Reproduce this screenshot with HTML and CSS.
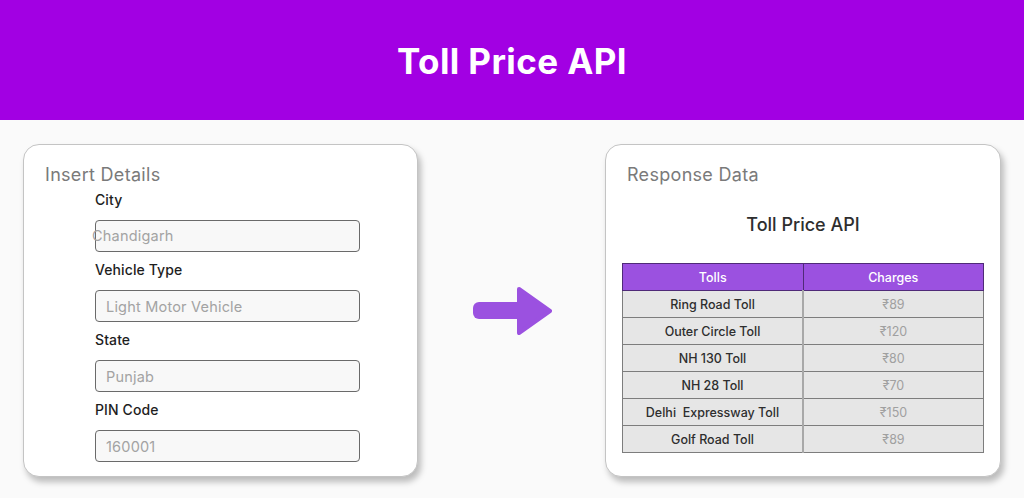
FILE: index.html
```html
<!DOCTYPE html>
<html lang="en">

<head>
    <meta charset="UTF-8" />
    <meta name="viewport" content="width=device-width, initial-scale=1.0" />
    <title>Toll Price API</title>
    <link rel="stylesheet" href="styles.css">
</head>

<body>
    <header class="top_bar">
        <h1>Toll Price API</h1>
    </header>
    <main class="content">
        <section class="card card_form">
            <h2 class="card_title">Insert Details</h2>
            <div class="fields">
                <div class="field">
                    <label>City</label>
                    <div class="input_wrap">
                        <input type="text" aria-label="City">
                        <span class="fake_placeholder">Chandigarh</span>
                    </div>
                </div>
                <div class="field">
                    <label>Vehicle Type</label>
                    <input type="text" placeholder="Light Motor Vehicle">
                </div>
                <div class="field">
                    <label>State</label>
                    <input type="text" placeholder="Punjab">
                </div>
                <div class="field">
                    <label>PIN Code</label>
                    <input type="text" placeholder="160001">
                </div>
            </div>
        </section>

        <div class="arrow">
            <svg width="80" height="50" viewBox="0 0 80 50">
                <rect x="1" y="16" width="50" height="17" rx="6" fill="#9b51e0" />
                <path d="M47 3 L78 25 L47 47 Z" fill="#9b51e0" stroke="#9b51e0" stroke-width="4" stroke-linejoin="round" />
            </svg>
        </div>

        <section class="card card_result">
            <h2 class="card_title">Response Data</h2>
            <h3 class="result_title">Toll Price API</h3>
            <table class="toll_table">
                <thead>
                    <tr>
                        <th>Tolls</th>
                        <th>Charges</th>
                    </tr>
                </thead>
                <tbody>
                    <tr><td>Ring Road Toll</td><td>₹89</td></tr>
                    <tr><td>Outer Circle Toll</td><td>₹120</td></tr>
                    <tr><td>NH 130 Toll</td><td>₹80</td></tr>
                    <tr><td>NH 28 Toll</td><td>₹70</td></tr>
                    <tr><td>Delhi&nbsp; Expressway Toll</td><td>₹150</td></tr>
                    <tr><td>Golf Road Toll</td><td>₹89</td></tr>
                </tbody>
            </table>
        </section>
    </main>
</body>

</html>
```

FILE: styles.css
```css
html,
body {
    margin: 0;
    padding: 0;
    height: 100%;
}

body {
    background: #fafafa;
    font-family: Inter, "Noto Sans", sans-serif;
}

.top_bar {
    background: #a200e3;
    height: 120px;
    display: flex;
    justify-content: center;
    align-items: center;
}

.top_bar h1 {
    margin: 2px 0 0 0;
    color: #fff;
    font-size: 35px;
    font-weight: 700;
    letter-spacing: 0.4px;
}

.content {
    display: flex;
    justify-content: space-between;
    align-items: center;
    padding: 24px 23px 0 23px;
}

.card {
    box-sizing: border-box;
    height: 333px;
    background: #fff;
    border: 1px solid #c4c4c4;
    border-radius: 16px;
    box-shadow: 3px 5px 6px rgba(0, 0, 0, 0.25);
}

.card_form {
    width: 395px;
    padding: 18px 21px 0 21px;
}

.card_result {
    width: 396px;
    padding: 18px 16px 0 16px;
}

.card_title {
    margin: 0;
    font-size: 18px;
    font-weight: 400;
    line-height: 24px;
    color: #7a7a7a;
    letter-spacing: 0.3px;
}

.card_result .card_title {
    padding-left: 5px;
}

.fields {
    margin-left: 50px;
    margin-top: 2px;
}

.field {
    display: flex;
    flex-direction: column;
    width: 265px;
    margin-bottom: 7px;
}

.field label {
    font-size: 14px;
    line-height: 22px;
    color: #1e1e1e;
    font-weight: 500;
    margin-bottom: 9px;
    letter-spacing: 0.1px;
}

.field input {
    box-sizing: border-box;
    width: 100%;
    height: 32px;
    border: 1px solid #6a6a6a;
    border-radius: 4px;
    background: #f8f8f8;
    padding: 0 10px;
    font-family: Inter, "Noto Sans", sans-serif;
    font-size: 14.5px;
    letter-spacing: 0.2px;
}

.field input::placeholder {
    color: #a3a3a3;
}

.input_wrap {
    position: relative;
    display: flex;
}

.fake_placeholder {
    position: absolute;
    left: -3px;
    top: 0;
    line-height: 32px;
    font-size: 14.5px;
    letter-spacing: 0.2px;
    color: #a3a3a3;
    pointer-events: none;
}

.arrow {
    display: flex;
    margin-left: 0;
}

.result_title {
    margin: 25px 0 0 0;
    text-align: center;
    font-size: 18px;
    font-weight: 500;
    line-height: 26px;
    color: #2e2e2e;
}

.toll_table {
    width: 100%;
    margin-top: 25px;
    border-collapse: collapse;
    table-layout: fixed;
    font-size: 12.5px;
}

.toll_table th {
    height: 26px;
    padding: 0;
    background: #9b51e0;
    color: #fff;
    font-weight: 500;
    border: 1px solid #4f2a78;
}

.toll_table td {
    height: 26px;
    padding: 0;
    text-align: center;
    background: #e6e6e6;
    border: 1px solid #7d7d7d;
    color: #2e2e2e;
    font-weight: 500;
}

.toll_table td:nth-child(2) {
    color: #a0a0a0;
    font-weight: 400;
    border-left-color: #a8a8a8;
    border-left-width: 2px;
}
```
